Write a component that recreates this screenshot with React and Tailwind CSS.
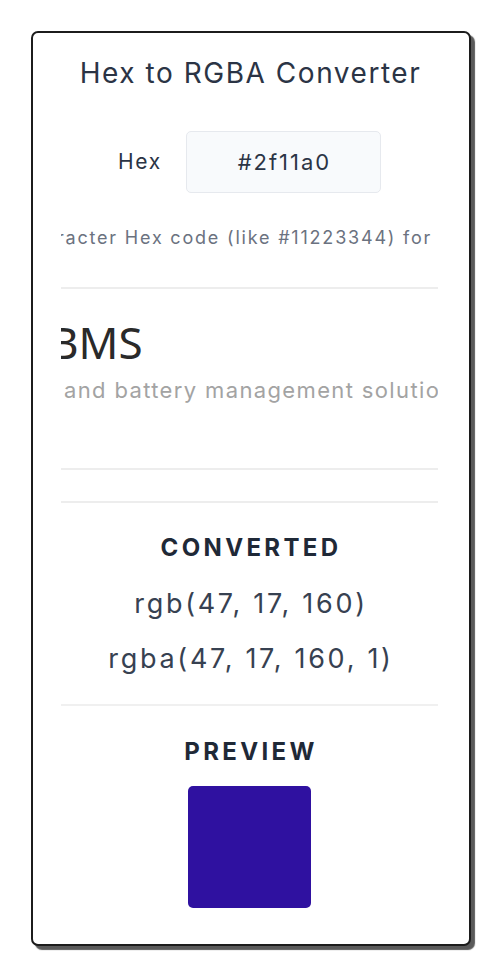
export default function App() {
  const font = { fontFamily: 'Inter, "Open Sans", sans-serif' };
  return (
    <div className="min-h-[976px] w-[500px] bg-white pl-[31px] pt-[31px]" style={font}>
      <div className="flex w-[440px] flex-col rounded-[7px] border-2 border-[#1c1c1c] bg-white pb-[36px] pl-[28px] pr-[31px] pt-[20px] shadow-[4px_4px_1px_#5a5a5a]">
        <div className="flex h-[40px] items-center justify-center pl-[2px] text-[28px] tracking-[0.055em] text-[#2b3445]">
          Hex to RGBA Converter
        </div>
        <div className="mt-[38px] flex h-[62px] items-center justify-center gap-[24px]">
          <span className="text-[21px] tracking-[0.08em] text-[#2b3445]">Hex</span>
          <div className="flex h-[62px] w-[195px] items-center justify-center rounded-[5px] border border-[#e6e9ee] bg-[#f8fafc] pl-[2px] text-[22px] tracking-[0.09em] text-[#2b3445]">
            #2f11a0
          </div>
        </div>
        <div className="mt-[32px] flex h-[24px] items-center overflow-hidden whitespace-nowrap text-[18px] tracking-[0.1em] text-[#6b7280]">
          <span className="flex w-0 shrink-0 justify-end">Use 8-cha</span>
          <span className="ml-[-4px]">racter Hex code (like #11223344) for transparency</span>
        </div>
        <div className="mt-[38px] h-[2px] bg-[#ededed]" />
        <div className="mt-[29px] flex h-[48px] items-center overflow-hidden whitespace-nowrap">
          <span className="ml-[-11px] text-[44px] text-[#2a2a2a]" style={{ fontFamily: '"Noto Sans", sans-serif' }}>BMS</span>
        </div>
        <div className="mt-[10px] flex h-[28px] items-center overflow-hidden whitespace-nowrap">
          <span className="ml-[3px] text-[22px] tracking-[0.062em] text-[#a3a3a3]">and battery management solutions</span>
        </div>
        <div className="mt-[64px] h-[2px] bg-[#ededed]" />
        <div className="mt-[31px] h-[2px] bg-[#ededed]" />
        <div className="mt-[31px] flex h-[28px] items-center justify-center pl-[3px] text-[24px] font-bold tracking-[0.14em] text-[#1f2937]">
          CONVERTED
        </div>
        <div className="mt-[24px] flex h-[36px] items-center justify-center pl-[3px] text-[27px] tracking-[0.1em] text-[#374151]">
          rgb(47, 17, 160)
        </div>
        <div className="mt-[19px] flex h-[36px] items-center justify-center pl-[3px] text-[27px] tracking-[0.1em] text-[#374151]">
          rgba(47, 17, 160, 1)
        </div>
        <div className="mt-[27px] h-[2px] bg-[#f0f0f0]" />
        <div className="mt-[32px] flex h-[28px] items-center justify-center pl-[3px] text-[24px] font-bold tracking-[0.14em] text-[#1f2937]">
          PREVIEW
        </div>
        <div className="mt-[20px] flex justify-center">
          <div className="h-[122px] w-[123px] rounded-[5px] bg-[#2f11a0]" />
        </div>
      </div>
    </div>
  );
}
